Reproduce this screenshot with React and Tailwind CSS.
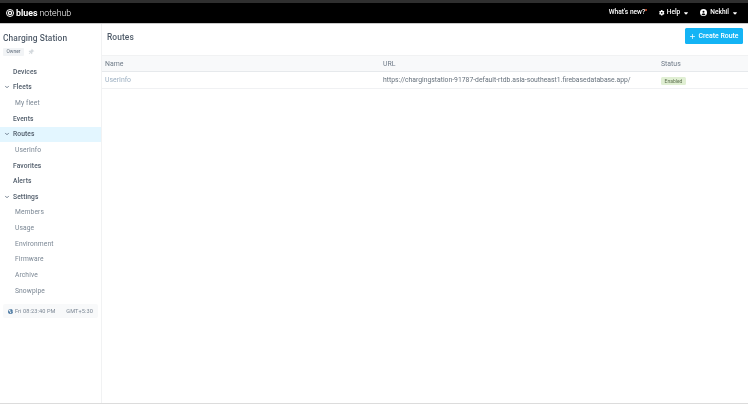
import React from 'react';
import { ChevronDown, Plus } from 'lucide-react';
import { FaCaretDown, FaCircleUser, FaGear, FaEarthAmericas, FaThumbtack } from 'react-icons/fa6';

const navItems = [
  { name: 'Devices', kind: 'top' },
  { name: 'Fleets', kind: 'group' },
  { name: 'My fleet', kind: 'sub' },
  { name: 'Events', kind: 'top' },
  { name: 'Routes', kind: 'group', active: true },
  { name: 'UserInfo', kind: 'sub' },
  { name: 'Favorites', kind: 'top' },
  { name: 'Alerts', kind: 'top' },
  { name: 'Settings', kind: 'group' },
  { name: 'Members', kind: 'sub' },
  { name: 'Usage', kind: 'sub' },
  { name: 'Environment', kind: 'sub' },
  { name: 'Firmware', kind: 'sub' },
  { name: 'Archive', kind: 'sub' },
  { name: 'Snowpipe', kind: 'sub' },
];

const NavRow = ({ item }) => (
  <div className={`h-[15.63px] flex items-center ${item.active ? 'bg-[#e3f6ff]' : ''}`}>
    <div className="w-[13px] shrink-0 flex justify-center pl-[1px]">
      {item.kind === 'group' && <ChevronDown className="w-[6px] h-[6px] text-[#4a5a6e]" strokeWidth={3} />}
    </div>
    <span className={item.kind === 'sub' ? 'pl-[2px] text-[#7b8794]' : 'text-[#4f5b69] font-medium'}>{item.name}</span>
  </div>
);

const Sidebar = () => (
  <aside className="w-[102px] shrink-0 border-r border-[#f1f2f3] text-[6.7px] tracking-[0.1px]">
    <div className="pl-[3px] pt-[10px] text-[8.4px] leading-[9px] font-medium text-[#4f5b69] tracking-[0.1px]">Charging Station</div>
    <div className="pl-[3px] mt-[5px] flex items-center gap-[4px]">
      <span className="h-[8px] w-[21px] text-center rounded-[1px] bg-[#f2f4f6] text-[4.8px] leading-[8px] text-[#5f6c7b]">Owner</span>
      <FaThumbtack className="w-[6px] h-[6px] text-[#d5dade] rotate-45" />
    </div>
    <nav className="mt-[8px]">
      {navItems.map((item) => (
        <NavRow key={item.name} item={item} />
      ))}
    </nav>
    <div className="mx-[3px] mt-[6px] h-[14px] px-[5px] rounded-[2px] bg-[#f8f9fa] flex items-center justify-between text-[5.6px] text-[#7b8794]">
      <span className="flex items-center gap-[2px]">
        <FaEarthAmericas className="w-[5px] h-[5px] text-[#44749f]" />
        Fri 08:23:40 PM
      </span>
      <span>GMT+5:30</span>
    </div>
  </aside>
);

const Header = () => (
  <header className="h-[24px] shrink-0 bg-black border-t-[3px] border-t-[#2f2f2f] border-b border-b-[#c9c9c9] flex items-center justify-between text-white">
    <div className="pl-[6px] flex items-center gap-[2px] text-[8.8px] leading-none">
      <svg viewBox="0 0 16 16" className="w-[8px] h-[8px]" fill="none" stroke="#fff">
        <circle cx="8" cy="8" r="7" strokeWidth="2" />
        <circle cx="8" cy="8" r="3.2" strokeWidth="2.4" />
      </svg>
      <span className="font-bold">blues</span>
      <span className="font-light">notehub</span>
    </div>
    <div className="flex items-center text-[6.6px] font-medium">
      <span className="relative mr-[14px]">
        What's new?
        <span className="absolute top-[1px] -right-[2px] w-[2px] h-[2px] rounded-full bg-[#e5532d]" />
      </span>
      <FaGear className="w-[5.5px] h-[5.5px] mr-[2px]" />
      <span>Help</span>
      <FaCaretDown className="w-[6px] h-[6px] ml-[3px] mr-[11px]" />
      <FaCircleUser className="w-[7px] h-[7px] mr-[3px]" />
      <span>Nekhil</span>
      <FaCaretDown className="w-[6px] h-[6px] ml-[3px] mr-[10px]" />
    </div>
  </header>
);

const RoutesTable = () => (
  <div className="text-[6.9px]">
    <div className="h-[17px] pt-[1px] bg-[#f8f9fa] border-t border-[#f1f2f3] border-b border-b-[#e6e9ec] flex items-center text-[#6f7b88]">
      <div className="w-[281px] shrink-0 pl-[3px]">Name</div>
      <div className="w-[278px] shrink-0">URL</div>
      <div>Status</div>
    </div>
    <div className="h-[17px] pt-[1px] border-b border-[#f0f1f3] flex items-center">
      <div className="w-[281px] shrink-0 pl-[3px] text-[#9db0c2]">UserInfo</div>
      <div className="w-[278px] shrink-0 whitespace-nowrap text-[6.8px] text-[#66717c]">https://chargingstation-91787-default-rtdb.asia-southeast1.firebasedatabase.app/</div>
      <div>
        <span className="block w-[25px] text-center h-[8px] rounded-[1.5px] bg-[#e0efd3] text-[5px] leading-[8px] text-[#5e7150]">Enabled</span>
      </div>
    </div>
  </div>
);

export default function App() {
  return (
    <div className="w-[748px] h-[404px] bg-white overflow-hidden">
      <div className="h-full flex flex-col will-change-transform font-['Roboto',sans-serif]">
        <Header />
        <div className="flex-1 flex border-b border-[#dcdcdc]">
          <Sidebar />
          <main className="flex-1 min-w-0">
            <div className="h-[31px] flex items-center justify-between pl-[5px] pr-[5px]">
              <h1 className="text-[8.4px] font-medium text-[#4f5b69] tracking-[0.1px] -mt-[5px]">Routes</h1>
              <button className="w-[58px] h-[16px] -mt-[7px] rounded-[1.5px] bg-[#14b4f5] text-white text-[6.9px] font-medium flex items-center justify-center gap-[2px]">
                <Plus className="w-[7px] h-[7px]" strokeWidth={2.5} />
                Create Route
              </button>
            </div>
            <RoutesTable />
          </main>
        </div>
      </div>
    </div>
  );
}
